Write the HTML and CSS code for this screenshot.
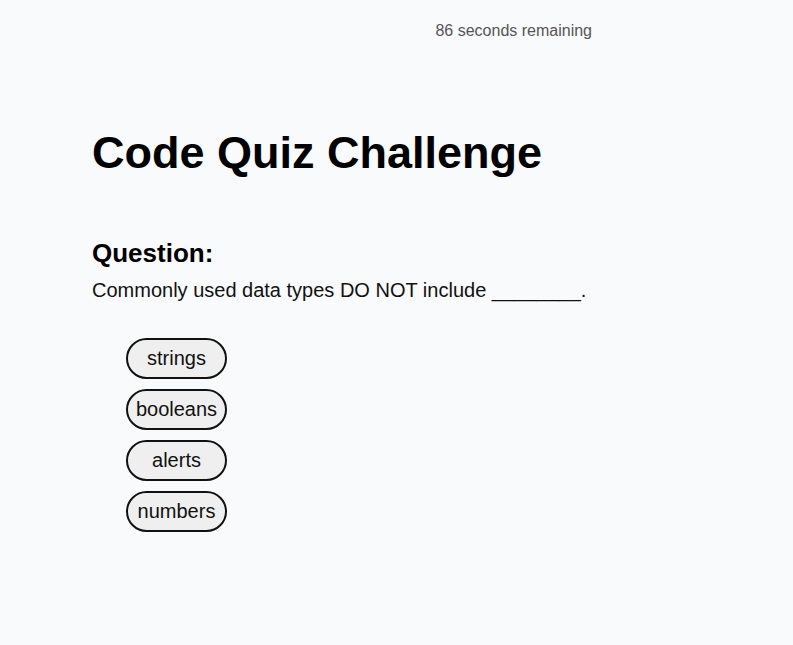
FILE: index.html
```html
<!DOCTYPE html>
<html lang="en">
<head>
<meta charset="utf-8">
<title>Code Quiz</title>
<link rel="stylesheet" href="styles.css">
</head>
<body>
<div class="page">
  <header class="timer">86 seconds remaining</header>
  <h1 class="title">Code Quiz Challenge</h1>
  <section class="quiz">
    <h2 class="label">Question:</h2>
    <p class="question">Commonly used data types DO NOT include ________.</p>
    <ul class="answers">
      <li><button class="answer">strings</button></li>
      <li><button class="answer">booleans</button></li>
      <li><button class="answer">alerts</button></li>
      <li><button class="answer">numbers</button></li>
    </ul>
  </section>
</div>
</body>
</html>
```

FILE: styles.css
```css
html, body {
  margin: 0;
  padding: 0;
  background: #f9fafb;
  font-family: "Liberation Sans", Arial, sans-serif;
  color: #111;
}
.page {
  width: 500px;
  margin-left: 92px;
  padding-top: 22px;
}
.timer {
  text-align: right;
  font-size: 16px;
  color: #555;
  line-height: 18px;
}
.title {
  font-size: 45px;
  font-weight: bold;
  margin: 87px 0 0;
  color: #000;
  line-height: 52px;
}
.label {
  font-size: 26px;
  font-weight: bold;
  margin: 59px 0 0;
  color: #000;
  line-height: 30px;
}
.question {
  font-size: 20px;
  margin: 11px 0 0;
  line-height: 23px;
}
.answers {
  list-style: none;
  margin: 36px 0 0;
  padding: 0 0 0 34px;
  display: flex;
  flex-direction: column;
  gap: 10px;
}
.answer {
  width: 101px;
  height: 41px;
  border: 2px solid #111;
  border-radius: 21px;
  background: #efefef;
  font-family: "Liberation Sans", Arial, sans-serif;
  font-size: 20px;
  color: #111;
  padding: 0;
}
```
